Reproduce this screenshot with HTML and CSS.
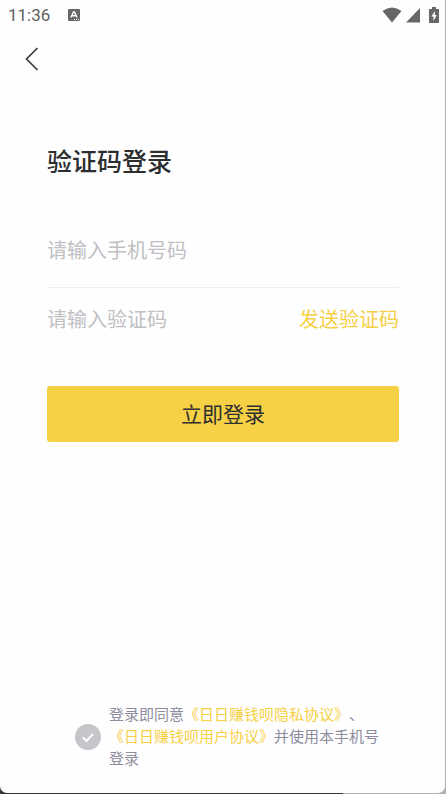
FILE: index.html
```html
<!DOCTYPE html>
<html lang="zh-CN">
<head>
<meta charset="utf-8">
<meta name="viewport" content="width=device-width, initial-scale=1">
<title>验证码登录</title>
<link rel="stylesheet" href="styles.css">
</head>
<body>
<div class="screen">
  <header class="status">
    <time class="clock">11:36</time>
    <svg class="ime" width="12" height="12" viewBox="0 0 12 12" aria-hidden="true">
      <rect width="12" height="12" rx="1" fill="#676767"/>
      <path d="M3 8.500 5.500 3h1L9 8.500M4 6.700h4" fill="none" stroke="#fff" stroke-width="1.400"/>
      <path d="M6 10.500h1M8 10.500h1M10 10.500h1" stroke="#fff"/>
    </svg>
    <div class="indicators">
      <svg width="20" height="16" viewBox="0 0 20 16" aria-hidden="true"><path d="M10 15.500 .5 4Q10-3 19.500 4Z" fill="#676767"/></svg>
      <svg width="14" height="16" viewBox="0 0 14 16" aria-hidden="true"><path d="M0 15.500 14 1V15.500Z" fill="#676767"/></svg>
      <svg class="battery" width="10" height="16" viewBox="0 0 10 16" aria-hidden="true"><path d="M3 0h4v2h2.300q.7 0 .7.700v12.600q0 .7-.7.700H.7q-.7 0-.7-.7V2.700Q0 2 .7 2H3Z" fill="#676767"/><path d="M5.800 4 2.500 9.500h2V14l3.200-6H5.800Z" fill="#fff"/></svg>
    </div>
  </header>
  <nav class="nav">
    <button class="back" type="button" aria-label="返回">
      <svg width="14" height="24" viewBox="0 0 14 24" aria-hidden="true"><path d="M12.500 1 1.500 12l11 11" fill="none" stroke="#3c3c3c" stroke-width="1.700"/></svg>
    </button>
  </nav>
  <main class="content">
    <h1 class="title">验证码登录</h1>
    <form class="form">
      <div class="field field-phone">
        <input class="input" type="tel" placeholder="请输入手机号码" aria-label="手机号码">
      </div>
      <div class="field">
        <input class="input" type="text" inputmode="numeric" placeholder="请输入验证码" aria-label="验证码">
        <button class="send" type="button">发送验证码</button>
      </div>
      <button class="submit" type="submit">立即登录</button>
    </form>
  </main>
  <footer class="agreement">
    <input class="check" type="checkbox" id="agree">
    <label class="terms" for="agree">登录即同意<a href="#privacy">《日日赚钱呗隐私协议》</a>、<a href="#terms">《日日赚钱呗用户协议》</a>并使用本手机号登录</label>
  </footer>
</div>
</body>
</html>
```
FILE: styles.css
```css
* {
  box-sizing: border-box;
}

body {
  margin: 0;
  min-height: 100vh;
  display: flex;
  padding: 0 1px 1px 0;
  background: linear-gradient(90deg, #3a3636 77%, #b0b0b0 77%) bottom / 100% 8px no-repeat #b0b0b0;
  font-family: Roboto, "Noto Sans CJK SC", sans-serif;
  font-weight: 400;
  text-spacing-trim: space-all;
  color: #2d2e30;
}

button,
input {
  margin: 0;
  padding: 0;
  border: 0;
  background: none;
  font: inherit;
  color: inherit;
}

button {
  cursor: pointer;
}

svg {
  display: block;
}

.screen {
  flex: 1;
  min-width: 0;
  display: flex;
  flex-direction: column;
  background: #fefefe;
  border-radius: 0 0 7px 7px;
}

.status {
  display: flex;
  align-items: center;
  height: 30px;
  padding: 0 6px 0 8px;
  color: #606060;
}

.clock {
  font-size: 17px;
}

.ime {
  margin-left: 18px;
}

.indicators {
  display: flex;
  gap: 4px;
  margin-left: auto;
}

.battery {
  margin-left: 5px;
}

.nav {
  display: flex;
  align-items: center;
  height: 58px;
  padding-left: 24px;
}

.back {
  padding: 0 2px 0 1px;
}

.content {
  padding: 0 46px 0 47px;
}

.title {
  margin: 57px 0 0;
  font-size: 25px;
  line-height: 36px;
  font-weight: 500;
}

.form {
  margin-top: 33px;
}

.field {
  display: flex;
  align-items: center;
  height: 64px;
}

.field-phone {
  height: 74px;
  border-bottom: 1px solid #eee;
}

.input {
  flex: 1;
  min-width: 0;
  font-size: 20px;
  line-height: 30px;
  outline: none;
}

.input::placeholder {
  color: #c0c0c4;
  opacity: 1;
}

.send {
  font-size: 20px;
  line-height: 30px;
  color: #f6d045;
}

.submit {
  width: 100%;
  height: 56px;
  margin-top: 34px;
  padding-bottom: 2px;
  border-radius: 3px;
  background: #f6d045;
  font-size: 21px;
}

.agreement {
  display: flex;
  align-items: center;
  gap: 8px;
  margin-top: auto;
  padding: 0 64px 23px 75px;
}

.check {
  flex: none;
  appearance: none;
  width: 26px;
  height: 26px;
  border-radius: 50%;
  background: #c6c6ca url("data:image/svg+xml,%3Csvg xmlns='http://www.w3.org/2000/svg' viewBox='0 0 26 26'%3E%3Cpath d='M8 13.500l3.500 3.500 6.500-7' fill='none' stroke='white' stroke-width='2'/%3E%3C/svg%3E") center / 100%;
}

.terms {
  font-size: 15px;
  line-height: 22px;
  color: #8c8c9c;
}

.terms a {
  color: #f6d045;
  text-decoration: none;
}
```
